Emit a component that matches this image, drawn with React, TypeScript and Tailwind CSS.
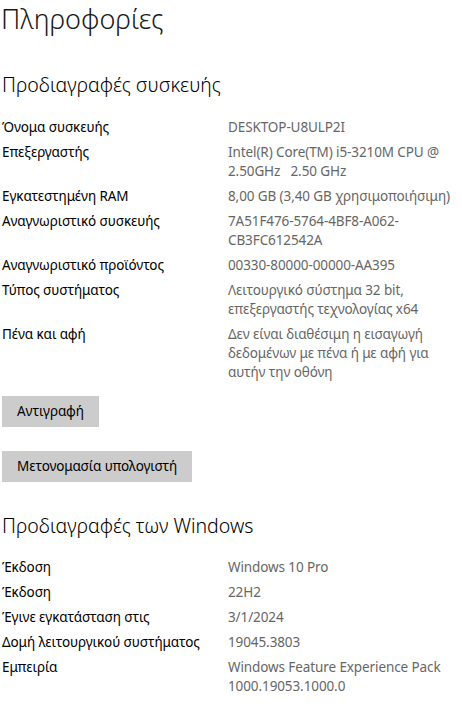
const deviceSpecs: [string, string[]][] = [
  ["Όνομα συσκευής", ["DESKTOP-U8ULP2I"]],
  ["Επεξεργαστής", ["Intel(R) Core(TM) i5-3210M CPU @", "2.50GHz   2.50 GHz"]],
  ["Εγκατεστημένη RAM", ["8,00 GB (3,40 GB χρησιμοποιήσιμη)"]],
  ["Αναγνωριστικό συσκευής", ["7A51F476-5764-4BF8-A062-", "CB3FC612542A"]],
  ["Αναγνωριστικό προϊόντος", ["00330-80000-00000-AA395"]],
  ["Τύπος συστήματος", ["Λειτουργικό σύστημα 32 bit,", "επεξεργαστής τεχνολογίας x64"]],
  [
    "Πένα και αφή",
    [
      "Δεν είναι διαθέσιμη η εισαγωγή",
      "δεδομένων με πένα ή με αφή για",
      "αυτήν την οθόνη",
    ],
  ],
];

const windowsSpecs: [string, string[]][] = [
  ["Έκδοση", ["Windows 10 Pro"]],
  ["Έκδοση", ["22H2"]],
  ["Έγινε εγκατάσταση στις", ["3/1/2024"]],
  ["Δομή λειτουργικού συστήματος", ["19045.3803"]],
  ["Εμπειρία", ["Windows Feature Experience Pack", "1000.19053.1000.0"]],
];

const SpecList = ({ rows }: { rows: [string, string[]][] }) => (
  <div className="flex flex-col gap-[6px]">
    {rows.map(([label, value], i) => (
      <div
        key={i}
        className="grid grid-cols-[226px_1fr] text-[13.5px] leading-[19px] tracking-[-0.1px]">
        <span className="text-black">{label}</span>
        <span className="text-[#666666]">
          {value.map((line, j) => (
            <span key={j} className="block whitespace-pre">
              {line}
            </span>
          ))}
        </span>
      </div>
    ))}
  </div>
);

const Button = ({ children }: { children: string }) => (
  <button
    type="button"
    className="h-[31px] self-start bg-[#cccccc] px-[15px] text-[13.5px] leading-[19px] tracking-[-0.1px] text-black">
    {children}
  </button>
);

export default function App() {
  return (
    <div
      className="h-[707px] w-[462px] overflow-hidden bg-white pl-[2px]"
      style={{ fontFamily: '"Noto Sans", "Open Sans", sans-serif' }}>
      <h1 className="-ml-[1px] text-[27px] font-light leading-[37px] text-[#1a1a1a]">
        Πληροφορίες
      </h1>

      <h2 className="mt-[34px] text-[19.5px] font-light leading-[28px] text-black">
        Προδιαγραφές συσκευής
      </h2>
      <div className="mt-[19px]">
        <SpecList rows={deviceSpecs} />
      </div>

      <div className="mt-[14px] flex flex-col gap-[24px]">
        <Button>Αντιγραφή</Button>
        <Button>Μετονομασία υπολογιστή</Button>
      </div>

      <h2 className="mt-[30px] text-[19.5px] font-light leading-[28px] text-black">
        Προδιαγραφές των Windows
      </h2>
      <div className="mt-[18px]">
        <SpecList rows={windowsSpecs} />
      </div>
    </div>
  );
}
